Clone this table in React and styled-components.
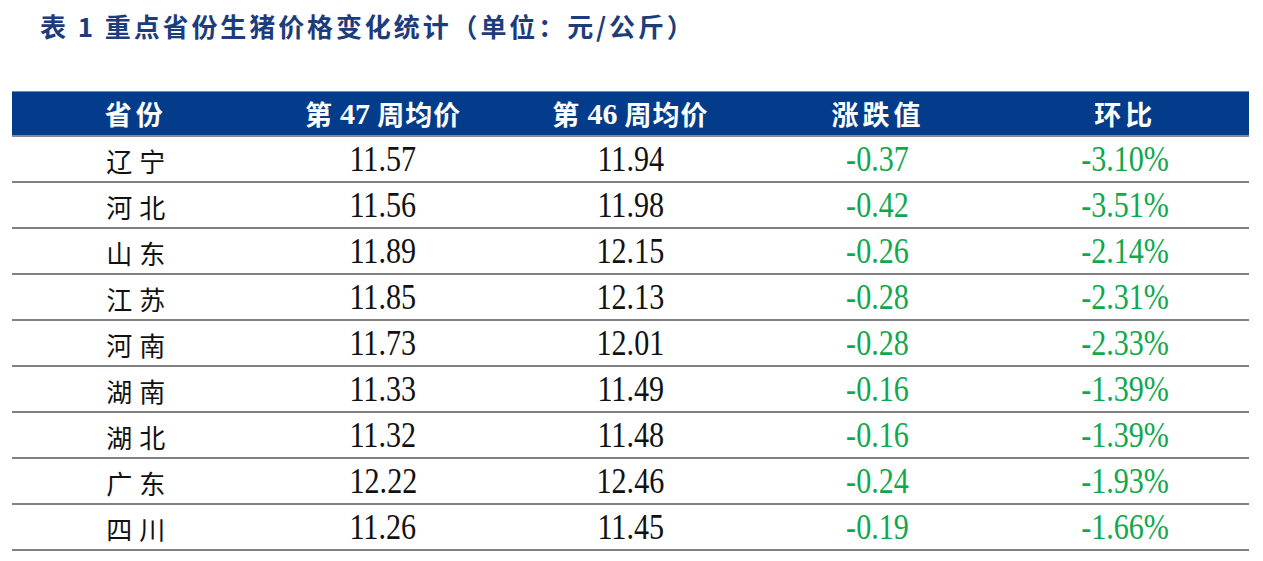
import styled, { createGlobalStyle } from 'styled-components'

const Global = createGlobalStyle`
  body {
    margin: 0;
    background: #ffffff;
  }
`

const rows = [
  ['辽宁', '11.57', '11.94', '-0.37', '-3.10%'],
  ['河北', '11.56', '11.98', '-0.42', '-3.51%'],
  ['山东', '11.89', '12.15', '-0.26', '-2.14%'],
  ['江苏', '11.85', '12.13', '-0.28', '-2.31%'],
  ['河南', '11.73', '12.01', '-0.28', '-2.33%'],
  ['湖南', '11.33', '11.49', '-0.16', '-1.39%'],
  ['湖北', '11.32', '11.48', '-0.16', '-1.39%'],
  ['广东', '12.22', '12.46', '-0.24', '-1.93%'],
  ['四川', '11.26', '11.45', '-0.19', '-1.66%'],
]

const Page = styled.div`
  width: 1263px;
  height: 561px;
  overflow: hidden;
  padding: 11px 0 0 0;
  box-sizing: border-box;
`

const Title = styled.h1`
  margin: 0 0 0 40px;
  height: 30px;
  line-height: 30px;
  font-family: "Noto Sans CJK SC", sans-serif;
  font-weight: 700;
  font-size: 26px;
  letter-spacing: 2.9px;
  color: #1d3c7c;
  white-space: nowrap;
`

const Table = styled.div`
  margin: 50px 0 0 12px;
  width: 1237px;
`

const Row = styled.div`
  display: grid;
  grid-template-columns: repeat(5, 1fr);
  height: 46px;
  box-sizing: border-box;
  border-bottom: 2px solid #808080;
`

const HeadRow = styled(Row)`
  background: #023c8a;
  border-top: 1.5px solid #8a8a8a;
  border-bottom: 2.5px solid #8a8a8a;
`

const HeadCell = styled.div`
  display: flex;
  align-items: center;
  justify-content: center;
  color: #ffffff;
  font-family: "Noto Sans CJK SC", sans-serif;
  font-weight: 700;
  font-size: 27px;
  letter-spacing: ${p => (p.$wide ? '4px' : '1px')};
  white-space: pre;
`

const HeadNum = styled.span`
  font-family: "Liberation Serif", "Times New Roman", serif;
  font-size: 30px;
  letter-spacing: 0;
`

const Cell = styled.div`
  display: flex;
  align-items: center;
  justify-content: center;
  padding-top: 2px;
`

const Province = styled.span`
  font-family: "Noto Sans CJK SC", sans-serif;
  font-size: 26px;
  letter-spacing: 7px;
  margin-right: -7px;
  color: #111111;
`

const Num = styled.span`
  display: inline-block;
  font-family: "Liberation Serif", "Times New Roman", serif;
  font-size: 35px;
  transform: scaleX(0.86);
  color: ${p => (p.$green ? '#0fa84c' : '#111111')};
`

export default function App() {
  return (
    <>
      <Global />
      <Page>
        <Title>表 1 重点省份生猪价格变化统计（单位：元/公斤）</Title>
        <Table>
          <HeadRow>
            <HeadCell $wide>省份</HeadCell>
            <HeadCell>第 <HeadNum>47</HeadNum> 周均价</HeadCell>
            <HeadCell>第 <HeadNum>46</HeadNum> 周均价</HeadCell>
            <HeadCell $wide>涨跌值</HeadCell>
            <HeadCell $wide>环比</HeadCell>
          </HeadRow>
          {rows.map(r => (
            <Row key={r[0]}>
              <Cell><Province>{r[0]}</Province></Cell>
              <Cell><Num>{r[1]}</Num></Cell>
              <Cell><Num>{r[2]}</Num></Cell>
              <Cell><Num $green>{r[3]}</Num></Cell>
              <Cell><Num $green>{r[4]}</Num></Cell>
            </Row>
          ))}
        </Table>
      </Page>
    </>
  )
}
